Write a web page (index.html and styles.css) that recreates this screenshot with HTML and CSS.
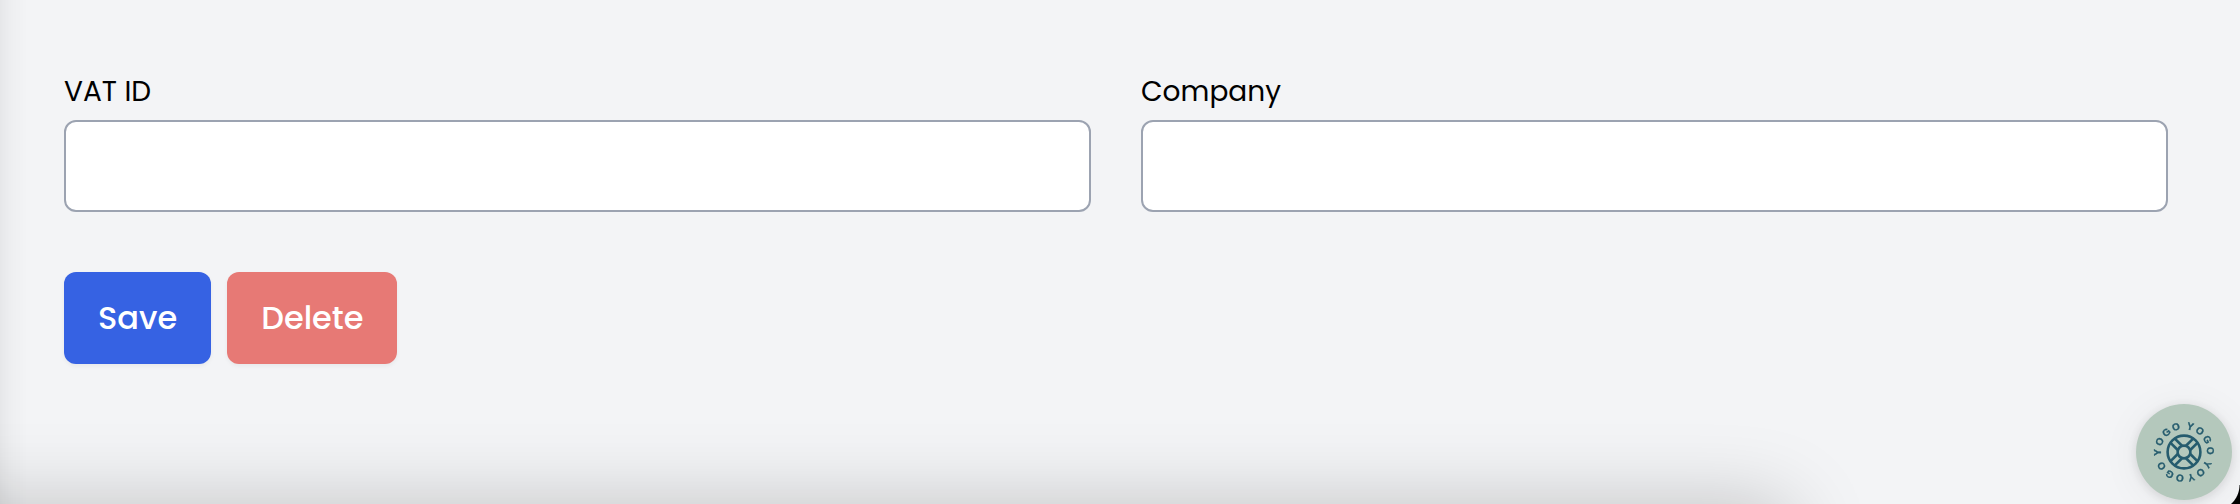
FILE: index.html
```html
<!DOCTYPE html>
<html lang="en">
<head>
<meta charset="utf-8">
<title>Company details</title>
<link rel="stylesheet" href="styles.css">
</head>
<body>
<main class="page">
  <form class="form">
    <div class="fields">
      <div class="field">
        <label class="label" for="vat">VAT ID</label>
        <input class="input" id="vat" type="text">
      </div>
      <div class="field">
        <label class="label" for="company">Company</label>
        <input class="input" id="company" type="text">
      </div>
    </div>
    <div class="actions">
      <button class="button save" type="button">Save</button>
      <button class="button delete" type="button">Delete</button>
    </div>
  </form>
</main>
<div class="edge-shade"></div>
<div class="bottom-shade"></div>
<div class="corner"></div>
<button class="badge" type="button" aria-label="Yogo help">
  <svg class="badge-art" viewBox="-48 -48 96 96">
    <g class="ring-text">
      <text y="-23" transform="rotate(14)">Y</text>
      <text y="-23" transform="rotate(37)">O</text>
      <text y="-23" transform="rotate(62)">G</text>
      <text y="-23" transform="rotate(87)">O</text>
      <text y="-23" transform="rotate(118)">Y</text>
      <text y="-23" transform="rotate(141)">O</text>
      <text y="-23" transform="rotate(164)">Y</text>
      <text y="-23" transform="rotate(189)">O</text>
      <text y="-23" transform="rotate(213)">G</text>
      <text y="-23" transform="rotate(238)">O</text>
      <text y="-23" transform="rotate(269)">Y</text>
      <text y="-23" transform="rotate(293)">O</text>
      <text y="-23" transform="rotate(318)">G</text>
      <text y="-23" transform="rotate(342)">O</text>
    </g>
    <g class="wheel">
      <circle r="16.4"/>
      <circle r="6.4"/>
      <path d="M-3-5.8V-16M3-5.8V-16M-3 5.8V16M3 5.8V16M-5.8-3H-16M-5.8 3H-16M5.8-3H16M5.8 3H16" transform="rotate(45)"/>
    </g>
  </svg>
</button>
</body>
</html>
```
FILE: styles.css
```css
* { box-sizing: border-box; }

body {
  margin: 0;
  min-height: 100vh;
  background: #f3f4f6;
  color: #000;
  font-family: Poppins, Inter, sans-serif;
}

.page { padding: 71px 72px 0 64px; }

.fields {
  display: grid;
  grid-template-columns: 1fr 1fr;
  gap: 50px;
}

.field {
  display: flex;
  flex-direction: column;
  gap: 7px;
}

.label {
  font-size: 28px;
  line-height: 42px;
}

.input {
  width: 100%;
  height: 92px;
  padding: 0 24px;
  border: 2px solid #9ca3b1;
  border-radius: 12px;
  background: #fff;
  font: inherit;
  font-size: 32px;
}

.actions {
  display: flex;
  gap: 16px;
  margin-top: 60px;
}

.button {
  padding: 22px 34px;
  border: 0;
  border-radius: 12px;
  color: #fff;
  font-family: inherit;
  font-size: 32px;
  font-weight: 500;
  line-height: 48px;
  box-shadow: 0 2px 4px rgba(0, 0, 0, 0.05);
}

.save { background: #3662e3; }
.delete { background: #e77975; }

.edge-shade {
  position: fixed;
  inset: 0 auto 0 0;
  width: 28px;
  background: linear-gradient(to right, rgba(0, 0, 0, 0.05), rgba(0, 0, 0, 0.02) 40%, transparent);
  pointer-events: none;
}

.bottom-shade {
  position: fixed;
  top: 100%;
  left: -80px;
  right: 450px;
  height: 200px;
  border-radius: 20px;
  box-shadow: 0 0 80px rgba(0, 0, 0, 0.21);
  pointer-events: none;
}

.corner {
  position: fixed;
  right: 0;
  bottom: 0;
  width: 26px;
  height: 19px;
  background: radial-gradient(circle at 0 0, transparent 25px, #000 26px);
  pointer-events: none;
}

.badge {
  position: fixed;
  right: 8px;
  bottom: 4px;
  width: 96px;
  height: 96px;
  padding: 0;
  border: 0;
  border-radius: 50%;
  background: #b4c8bc;
  box-shadow: 0 2px 12px rgba(0, 0, 0, 0.12), 0 4px 40px rgba(0, 0, 0, 0.06);
}

.badge-art { display: block; width: 100%; height: 100%; }

.ring-text {
  fill: #265c6e;
  stroke: #265c6e;
  stroke-width: 0.3;
  font-size: 10px;
  font-weight: 700;
  text-anchor: middle;
}

.wheel {
  fill: none;
  stroke: #265c6e;
  stroke-width: 2.6;
}
```
